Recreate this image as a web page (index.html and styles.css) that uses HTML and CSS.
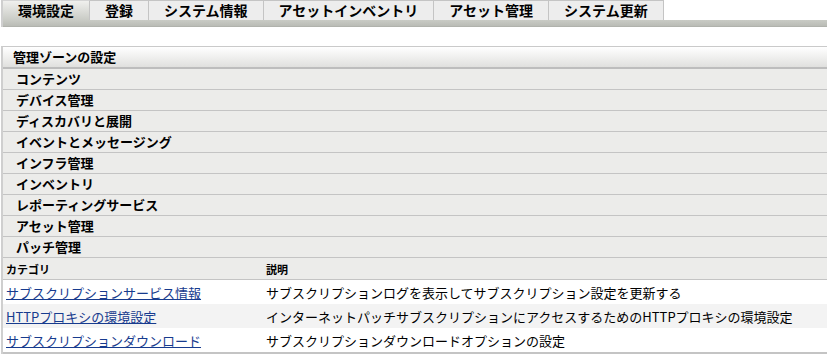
FILE: index.html
```html
<!DOCTYPE html>
<html lang="ja">
<head>
    <meta charset="UTF-8">
    <meta name="viewport" content="width=device-width, initial-scale=1.0">
    <title>環境設定</title>
    <link rel="stylesheet" href="styles.css">
</head>
<body>
    <div class="tab-bar">
        <div class="tabs">
            <div class="tab selected">環境設定</div>
            <div class="tab">登録</div>
            <div class="tab">システム情報</div>
            <div class="tab">アセットインベントリ</div>
            <div class="tab">アセット管理</div>
            <div class="tab">システム更新</div>
        </div>
        <div class="tab-strip"></div>
    </div>

    <div class="settings-panel">
        <div class="panel-header">管理ゾーンの設定</div>
        <div class="menu-row">コンテンツ</div>
        <div class="menu-row">デバイス管理</div>
        <div class="menu-row">ディスカバリと展開</div>
        <div class="menu-row">イベントとメッセージング</div>
        <div class="menu-row">インフラ管理</div>
        <div class="menu-row">インベントリ</div>
        <div class="menu-row">レポーティングサービス</div>
        <div class="menu-row">アセット管理</div>
        <div class="menu-row">パッチ管理</div>

        <div class="table-head">
            <div class="col-category">カテゴリ</div>
            <div class="col-desc">説明</div>
        </div>
        <div class="table-row">
            <div class="col-category"><a href="#">サブスクリプションサービス情報</a></div>
            <div class="col-desc">サブスクリプションログを表示してサブスクリプション設定を更新する</div>
        </div>
        <div class="table-row alt">
            <div class="col-category"><a href="#">HTTPプロキシの環境設定</a></div>
            <div class="col-desc">インターネットパッチサブスクリプションにアクセスするためのHTTPプロキシの環境設定</div>
        </div>
        <div class="table-row">
            <div class="col-category"><a href="#">サブスクリプションダウンロード</a></div>
            <div class="col-desc">サブスクリプションダウンロードオプションの設定</div>
        </div>
    </div>
</body>
</html>
```

FILE: styles.css
```css
body {
    margin: 0;
    font-family: "Noto Sans CJK JP", "DejaVu Sans", sans-serif;
    font-size: 13px;
    color: #000;
    background-color: #fff;
}

.tab-bar {
    margin-left: 1px;
    border-left: 2px solid #cfcfcf;
}

.tabs {
    display: flex;
}

.tab {
    height: 19px;
    line-height: 19px;
    padding: 0 15px;
    background-color: #ededed;
    border-top: 1px solid #c4c4c4;
    border-right: 1px solid #c4c4c4;
    font-size: 14px;
    font-weight: bold;
    white-space: nowrap;
}

.tab.selected {
    background: linear-gradient(#f0f0ee, #c9cbc5);
    border-top-color: #d4d4d4;
    border-right-color: #c4c4c4;
}

.tab-strip {
    height: 6px;
    background: linear-gradient(#c9cbc5, #babcb6);
    border-bottom: 1px solid #b0b2ac;
}

.settings-panel {
    margin-top: 19px;
    margin-left: 1px;
    border-left: 2px solid #cfcfcf;
    border-top: 1px solid #cacaca;
}

.panel-header {
    height: 20px;
    line-height: 20px;
    padding-left: 10px;
    background: linear-gradient(#ffffff, #e0e0de);
    border-bottom: 2px solid #bdbdbd;
    font-weight: bold;
}

.menu-row {
    height: 20px;
    line-height: 20px;
    padding-left: 13px;
    background-color: #ececea;
    border-bottom: 1px solid #c4c4c4;
    font-weight: bold;
}

.table-head,
.table-row {
    display: flex;
    align-items: center;
}

.table-head {
    height: 21px;
    background-color: #ececea;
    border-bottom: 1px solid #c4c4c4;
    font-size: 11px;
    font-weight: bold;
}

.table-row {
    height: 24px;
}

.table-row.alt {
    background-color: #f3f3f3;
}

.table-row:last-child {
    border-bottom: 2px solid #c4c4c4;
}

.col-category {
    width: 260px;
    padding-left: 3px;
    flex-shrink: 0;
}

.col-desc {
    white-space: nowrap;
}

.col-category a {
    color: #173b8e;
    text-decoration: underline;
}
```
